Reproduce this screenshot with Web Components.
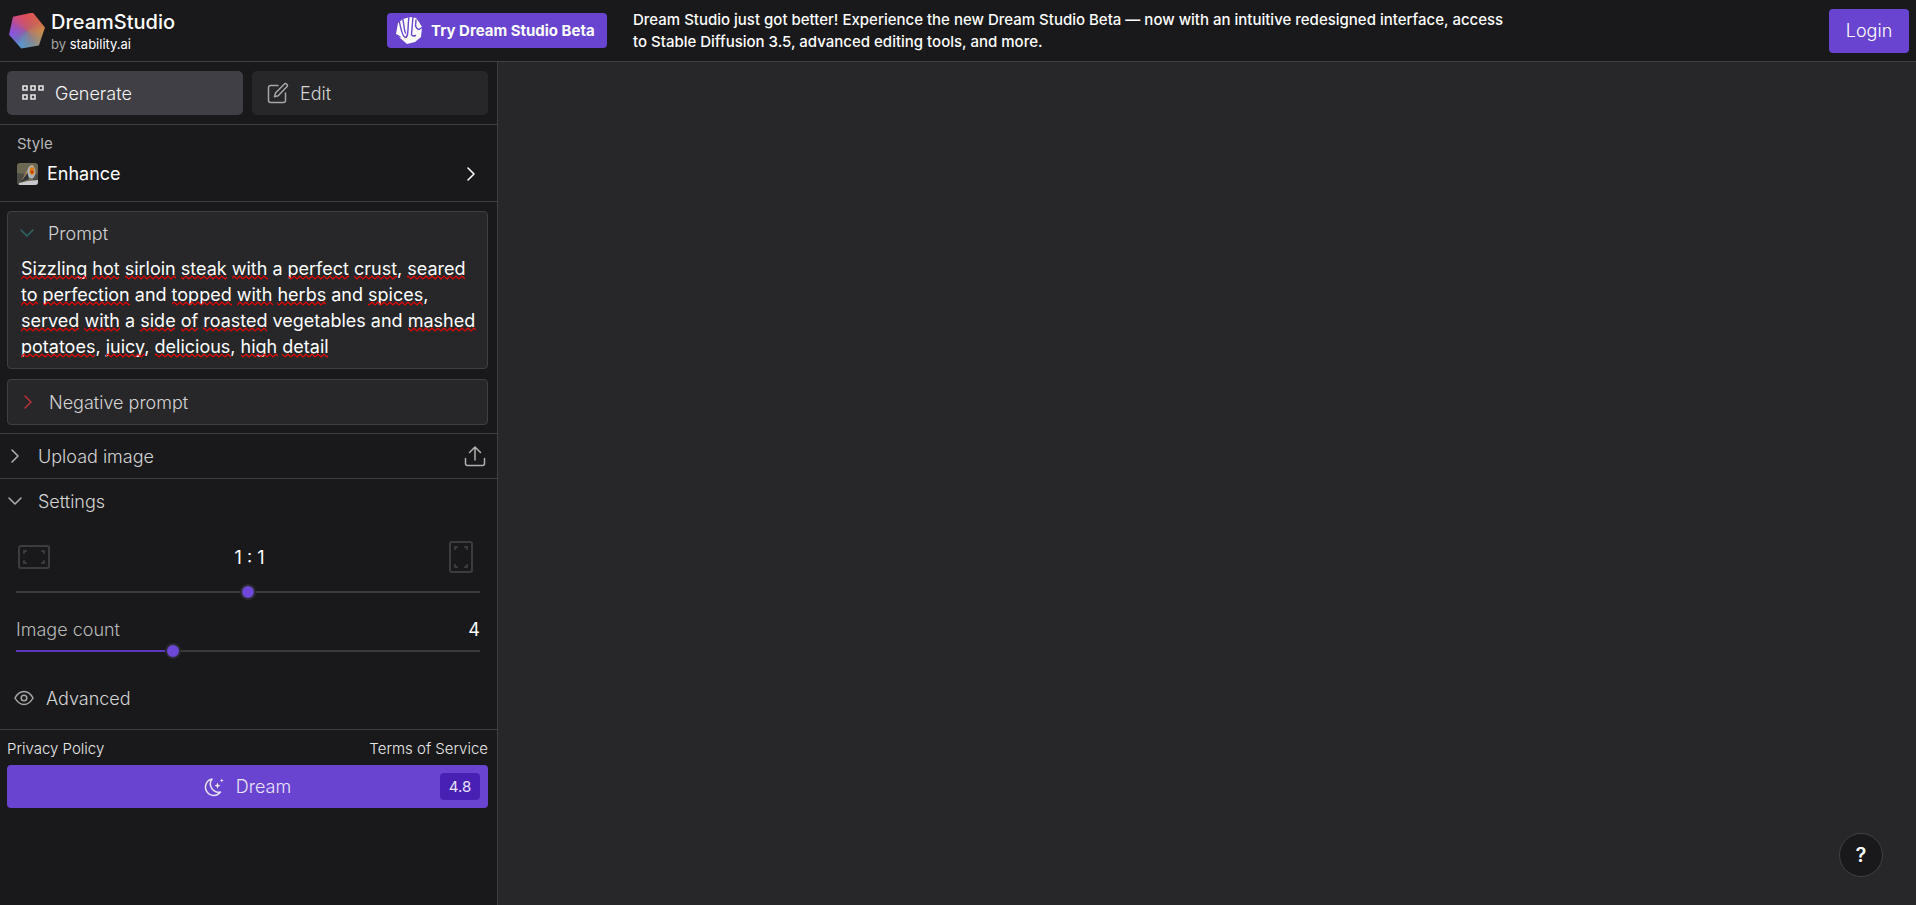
<!DOCTYPE html>
<html lang="en">
<head>
<meta charset="utf-8">
<title>DreamStudio</title>
<style>
html, body { margin: 0; height: 100%; }
body { background: #27272a; color: #fff; font-family: Inter, "Liberation Sans", sans-serif; font-size: 18px;
  --line: #3f3f43; --panel: #19191b; --card: #27272a; --accent: #6844d0; --soft: #d4d4d4; --muted: #a6a6a6; }
</style>
</head>
<body>
<dream-app></dream-app>
<script>
const define = (name, html, setup) => {
  const template = document.createElement('template');
  template.innerHTML = '<style>*{box-sizing:border-box}button{font:inherit;color:inherit;border:0;padding:0;margin:0;background:none;cursor:pointer}svg{display:block;flex:none}</style>' + html;
  customElements.define(name, class extends HTMLElement {
    constructor() {
      super();
      this.attachShadow({ mode: 'open' }).append(template.content.cloneNode(true));
    }
    connectedCallback() { if (setup) setup(this, this.shadowRoot); }
  });
};

const ICONS = {
  grid: ['0 0 24 18', 24, 18, '<path d="M2 2h4v4H2zM10 2h4v4h-4zM18 2h4v4h-4zM2 11h4v4H2zM10 11h4v4h-4z" stroke-width="1.6" stroke-linejoin="miter"/>'],
  edit: ['-1 0 24 22', 24, 22, '<path d="M11 3.5H3.5a2 2 0 0 0-2 2v13a2 2 0 0 0 2 2h13a2 2 0 0 0 2-2V11"/><path d="M17.2 2.2a1.8 1.8 0 0 1 2.6 2.6l-8.6 9-3.7 1 1-3.7z"/>'],
  right: ['0 0 14 14', 14, 14, '<path d="M4 1l6 6-6 6"/>'],
  down: ['0 0 14 14', 14, 14, '<path d="M1 4l6 6 6-6"/>'],
  upload: ['0 0 22 22', 22, 22, '<path d="M1.5 13.5v5a2 2 0 0 0 2 2h15a2 2 0 0 0 2-2v-5M11 15V2M5.500 7.500 11 2l5.500 5.500"/>'],
  landscape: ['0 0 32 24', 32, 24, '<rect x="1" y="1" width="30" height="22" rx="2" stroke-width="2"/><path d="M6 8V6h2M24 6h2v2M6 16v2h2M24 18h2v-2" stroke-width="2"/>'],
  portrait: ['0 0 24 32', 24, 32, '<rect x="1" y="1" width="22" height="30" rx="2" stroke-width="2"/><path d="M6 8V6h2M16 6h2v2M6 24v2h2M16 26h2v-2" stroke-width="2"/>'],
  eye: ['0 0 20 16', 20, 16, '<path d="M1 8q3.500-6.500 9-6.500T19 8q-3.500 6.500-9 6.500T1 8z"/><circle cx="10" cy="8" r="2.800"/>'],
  moon: ['0 0 20 20', 20, 20, '<path d="M8 2A8.300 8.300 0 1 0 16.500 15 8.300 8.300 0 0 1 8 2z" stroke-width="1.500"/><path d="M13.500 5.500l.9 2.200 2.200.9-2.200.9-.9 2.200-.9-2.200-2.200-.9 2.200-.9zM17.800 1.500l.6 1.400 1.400.6-1.400.6-.6 1.400-.6-1.400-1.400-.6 1.400-.6z" fill="currentColor" stroke="none"/>'],
  beta: ['0 0 27 27', 27, 27, '<path d="M14 0l6 1 3 4 3 5-1 10-6 5-8 2-8-7L0 17 2 6l5-4z" fill="#fff" stroke="none"/><g stroke="#6844d0" stroke-width="1.400"><path d="M3 3.500C5 10 5.500 19.500 9.500 20.500 13 20 11.500 8 13 0M7 2.500C8 8 8 13 9.500 16"/><path d="M17 0l-1.500 17.500q1 2.500 4 1M20 3l-.5 6q1 3 3.500 3.500l3-2M1 18l3 2"/></g>']
};

define('ds-icon', '<style>:host{display:block;flex:none}</style><svg aria-hidden="true" fill="none" stroke="currentColor" stroke-width="1.5" stroke-linecap="round" stroke-linejoin="round"></svg>', (el, root) => {
  const [box, w, h, body] = ICONS[el.getAttribute('name')];
  const svg = root.querySelector('svg');
  svg.setAttribute('viewBox', box);
  svg.setAttribute('width', w);
  svg.setAttribute('height', h);
  svg.innerHTML = body;
});

define('ds-logo', `<style>
:host{display:block;width:36px;height:36px;flex:none;clip-path:polygon(11% 12%,66% 0,100% 42%,83% 92%,34% 100%,0 62%);
background:radial-gradient(circle,rgb(160 100 130 / .6),transparent 60%),conic-gradient(#df5058,#d5644e 50deg,#cc8c48 90deg,#a58e6d 125deg,#7b8f9d 160deg,#5597cc 205deg,#6c70cc 230deg,#8b53df 265deg,#a84bb0 295deg,#d34d75 325deg,#df5058)}
</style>`);

define('ds-header', `<style>
:host{display:flex;align-items:center;height:62px;padding:0 7px 0 9px;background:var(--panel);border-bottom:1px solid var(--line)}
.brand{display:flex;align-items:center;gap:6px;width:378px;flex:none}
.name{font-size:20px;line-height:26px;font-weight:500}
.by{font-size:13px;line-height:18px;color:var(--muted)}
a{color:#fff;text-decoration:none}
.beta{display:flex;align-items:center;gap:8px;height:35px;width:220px;padding-left:9px;border-radius:4px;background:var(--accent);font-size:15px;font-weight:700;white-space:nowrap;flex:none}
p{margin:0 auto 0 26px;font-size:15px;line-height:22px;max-width:884px;font-weight:500}
.login{width:80px;height:44px;border-radius:4px;background:var(--accent);font-weight:300;flex:none}
</style>
<div class="brand"><ds-logo></ds-logo><div><div class="name">DreamStudio</div><div class="by">by <a href="#">stability.ai</a></div></div></div>
<a class="beta" href="#"><ds-icon name="beta"></ds-icon><span>Try Dream Studio Beta</span></a>
<p>Dream Studio just got better! Experience the new Dream Studio Beta — now with an intuitive redesigned interface, access to Stable Diffusion 3.5, advanced editing tools, and more.</p>
<button class="login">Login</button>`);

define('ds-tab', `<style>
:host{display:block;flex:1}
button{display:flex;align-items:center;gap:10px;width:100%;height:44px;padding:0 14px;border-radius:5px;background:var(--card);color:var(--soft);font-weight:300}
::slotted(ds-icon){color:var(--muted)}
:host([active]) button{background:#3f3f45;color:#f5f5f5}
:host([active]) ::slotted(ds-icon){color:#e5e5e5}
</style><button><slot name="icon"></slot><slot></slot></button>`);

define('ds-style-picker', `<style>
:host{display:block;border-bottom:1px solid var(--line);height:77px}
button{display:grid;grid-template-columns:21px 1fr auto;column-gap:9px;align-items:center;width:100%;padding:8px 19px 0 17px;text-align:left}
.label{grid-column:1 / -1;font-size:15px;line-height:22px;color:#b5b5b5}
.value{line-height:38px}
</style>
<button><span class="label">Style</span>
<svg width="21" height="22" viewBox="0 0 21 22" aria-hidden="true"><defs><clipPath id="c"><rect width="21" height="22" rx="3"/></clipPath></defs><g clip-path="url(#c)"><path fill="#6d6853" d="M0 0h21v22H0z"/><path fill="#4c4c44" d="M0 10l8 1-3 11H0zM17 13l4-3v12h-6z"/><path fill="#b98d5c" d="M5 17L12 4q3-4 5-1l-5 13z"/><path fill="#2e3339" d="M4 19l7-10 1 7z"/><ellipse cx="14.500" cy="9" rx="4" ry="6.500" fill="#a9b6bd"/><ellipse cx="15" cy="8" rx="2.500" ry="4" fill="#de7b16"/><circle cx="15" cy="9" r="1.300" fill="#b8330f"/><path fill="#c9c8cc" d="M2 20l9-2 10-1v5H2z"/></g></svg>
<span class="value">Enhance</span><ds-icon name="right"></ds-icon></button>`);

define('ds-prompt', `<style>
:host{display:block;border:1px solid var(--line);border-radius:4px;background:var(--card)}
button{display:flex;align-items:center;gap:14px;height:42px;padding:0 12px;width:100%;font-weight:300;color:var(--soft)}
ds-icon{color:#2f6666}
.field{position:relative;padding:2px 8px 8px 13px}
textarea{display:block;width:100%;height:104px;resize:none;border:0;padding:0;outline:0;background:none;color:#fff;font:inherit;line-height:26px;overflow:hidden}
.marks{position:absolute;left:13px;top:2px;pointer-events:none}
</style>
<button aria-expanded="true"><ds-icon name="down"></ds-icon><label for="prompt">Prompt</label></button>
<div class="field"><textarea id="prompt" spellcheck="false">Sizzling hot sirloin steak with a perfect crust, seared to perfection and topped with herbs and spices, served with a side of roasted vegetables and mashed potatoes, juicy, delicious, high detail</textarea>
<svg class="marks" width="460" height="106" aria-hidden="true"><defs><pattern id="z" width="6" height="26" patternUnits="userSpaceOnUse"><path d="M-1 22l1 1 3-3 3 3 1-1" fill="none" stroke="#f00000" stroke-width="1.200"/></pattern></defs><g fill="url(#z)"></g></svg></div>`, (el, root) => {
  // Spelling marks: every word is flagged except the ones in this set.
  const known = new Set(['a', 'and', 'vegetables']);
  const pen = document.createElement('canvas').getContext('2d');
  pen.font = '18px Inter, "Liberation Sans", sans-serif';
  const width = (s) => pen.measureText(s).width;
  const room = 459;
  const rects = [];
  let line = '', row = 0;
  for (const word of root.querySelector('textarea').value.split(' ')) {
    if (line && width(line + word) > room) { line = ''; row++; }
    const bare = word.replace(',', '');
    if (!known.has(bare)) rects.push(`<rect x="${Math.round(width(line))}" y="${row * 26}" width="${Math.round(width(bare))}" height="26"/>`);
    line += word + ' ';
  }
  root.querySelector('g').innerHTML = rects.join('');
});

define('ds-negative', `<style>
:host{display:block;border:1px solid var(--line);border-radius:4px;background:var(--card)}
button{display:flex;align-items:center;gap:14px;height:44px;padding:0 13px;width:100%;font-weight:300;color:var(--soft)}
ds-icon{color:#b93232}
</style><button><ds-icon name="right"></ds-icon><slot></slot></button>`);

define('ds-settings', `<style>
input{-webkit-appearance:none;appearance:none;display:block;width:100%;height:16px;margin:0;background:none}
input::-webkit-slider-runnable-track{height:2px;background:linear-gradient(to right,#5a35bd var(--fill),#3a3a3d var(--fill))}
input::-webkit-slider-thumb{-webkit-appearance:none;width:16px;height:16px;margin-top:-7px;border-radius:50%;border:2px solid #2b2931;background:#6d48d7}
:host{display:block;padding:18px 17px 0 16px}
.ratio{display:flex;align-items:center;justify-content:space-between;height:32px;color:#3c3c3f;padding:0 7px 0 2px}
label{color:#fff}
.one{--fill:0%;margin-top:11px}
.row{display:flex;justify-content:space-between;line-height:26px;margin-top:17px}
.row label{color:#b8b8b8;font-weight:300}
.two{--fill:34%}
button{display:flex;align-items:center;gap:12px;height:30px;margin:24px 0 0 -2px;font-weight:300;color:var(--soft)}
button ds-icon{color:var(--muted)}
</style>
<div class="ratio"><ds-icon name="landscape"></ds-icon><label for="r">1 : 1</label><ds-icon name="portrait"></ds-icon></div>
<input class="one" id="r" type="range" min="0" max="10" value="5">
<div class="row"><label for="n">Image count</label><output for="n">4</output></div>
<input class="two" id="n" type="range" min="1" max="10" value="4">
<button><ds-icon name="eye"></ds-icon>Advanced</button>`);

define('ds-footer', `<style>
:host{display:block;border-top:1px solid var(--line);padding:7px 9px 0 7px}
nav{display:flex;justify-content:space-between;font-size:15px;line-height:24px;margin-bottom:4px;font-weight:300}
a{color:#e8e8e8;text-decoration:none}
button{display:grid;grid-template-columns:1fr auto 1fr;align-items:center;width:100%;height:43px;padding:0 8px;border-radius:4px;background:var(--accent);color:#e9e3fa;font-weight:300}
.go{display:flex;align-items:center;gap:12px;grid-column:2}
.cost{justify-self:end;width:40px;line-height:27px;border-radius:4px;background:#4820b3;font-size:15px;font-weight:400}
</style>
<nav><a href="#">Privacy Policy</a><a href="#">Terms of Service</a></nav>
<button><span class="go"><ds-icon name="moon"></ds-icon>Dream</span><span class="cost">4.8</span></button>`);

define('ds-disclosure', `<style>
:host{display:block;border-top:1px solid var(--line)}
button{display:flex;align-items:center;gap:16px;width:100%;height:44px;padding:0 11px 0 8px;font-weight:300;color:var(--soft)}
.chevron,::slotted(ds-icon){color:#b0b0b0}
.label{flex:1;text-align:left}
</style><button><span class="chevron"></span><span class="label"></span><slot name="action"></slot></button><slot></slot>`, (el, root) => {
  root.querySelector('.chevron').innerHTML = `<ds-icon name="${el.getAttribute('icon')}"></ds-icon>`;
  root.querySelector('.label').textContent = el.getAttribute('label');
});

define('ds-sidebar', `<style>
:host{display:block;width:498px;flex:none;background:var(--panel);border-right:1px solid var(--line)}
.tabs{display:flex;gap:9px;padding:9px 9px 9px 7px;border-bottom:1px solid var(--line)}
.cards{display:flex;flex-direction:column;gap:10px;padding:9px 9px 8px 7px}
.settings{padding-bottom:16px}
</style>
<div class="tabs"><ds-tab active><ds-icon slot="icon" name="grid"></ds-icon>Generate</ds-tab><ds-tab><ds-icon slot="icon" name="edit"></ds-icon>Edit</ds-tab></div>
<ds-style-picker></ds-style-picker>
<div class="cards"><ds-prompt></ds-prompt><ds-negative>Negative prompt</ds-negative></div>
<ds-disclosure icon="right" label="Upload image"><ds-icon slot="action" name="upload"></ds-icon></ds-disclosure>
<ds-disclosure class="settings" icon="down" label="Settings"><ds-settings></ds-settings></ds-disclosure>
<ds-footer></ds-footer>`);

define('ds-help', `<style>
:host{position:fixed;right:33px;bottom:28px}
button{width:44px;height:44px;border-radius:50%;border:1px solid #414144;background:var(--panel);font-size:20px;font-weight:600;color:#fff}
</style><button aria-label="Help">?</button>`);

define('dream-app', `<style>
:host{display:flex;flex-direction:column;min-height:100%}
.body{display:flex;flex:1}
main{flex:1}
</style><ds-header></ds-header><div class="body"><ds-sidebar></ds-sidebar><main></main></div><ds-help></ds-help>`);
</script>
</body>
</html>
